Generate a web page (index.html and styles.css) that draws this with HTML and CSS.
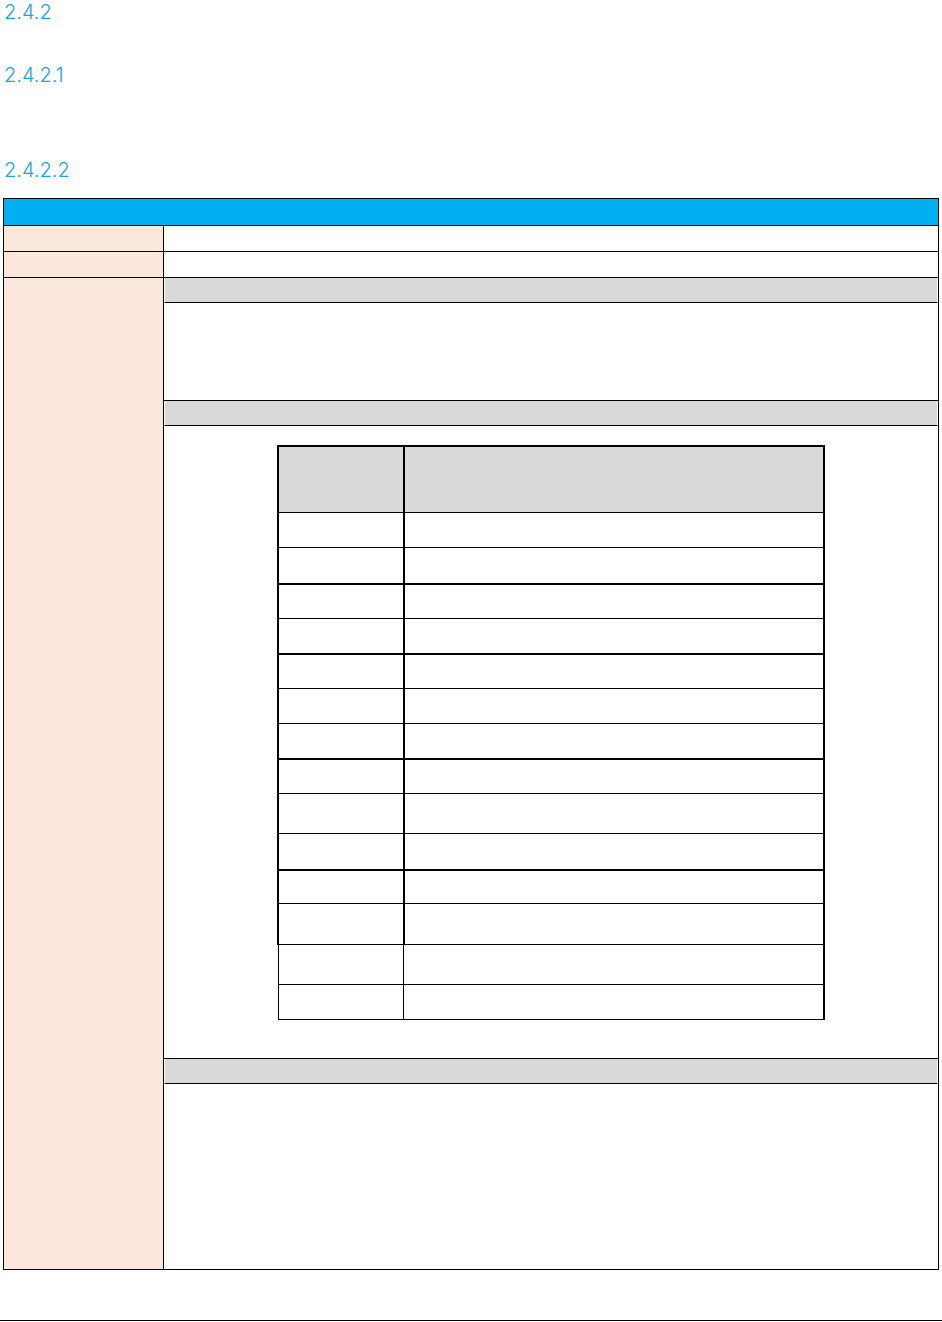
FILE: index.html
```html
<!DOCTYPE html>
<html lang="es">
<head>
    <meta charset="UTF-8">
    <meta name="viewport" content="width=device-width, initial-scale=1.0">
    <title>2.4.2</title>
    <link rel="stylesheet" href="styles.css">
</head>
<body>
    <div class="heading">2.4.2</div>
    <div class="heading sub">2.4.2.1</div>
    <div class="heading subsub">2.4.2.2</div>

    <div class="ficha">
        <div class="ficha-head"></div>
        <div class="ficha-row">
            <div class="label"></div>
            <div class="value"></div>
        </div>
        <div class="ficha-row">
            <div class="label"></div>
            <div class="value"></div>
        </div>
        <div class="ficha-row last">
            <div class="label"></div>
            <div class="value">
                <div class="band"></div>
                <div class="block intro"></div>
                <div class="band"></div>
                <div class="block">
                    <div class="inner">
                        <div class="irow head"><div class="c1"></div><div class="c2"></div></div>
                        <div class="irow h35"><div class="c1"></div><div class="c2"></div></div>
                        <div class="irow h37 thick"><div class="c1"></div><div class="c2"></div></div>
                        <div class="irow h34"><div class="c1"></div><div class="c2"></div></div>
                        <div class="irow h36 thick"><div class="c1"></div><div class="c2"></div></div>
                        <div class="irow h34"><div class="c1"></div><div class="c2"></div></div>
                        <div class="irow h35"><div class="c1"></div><div class="c2"></div></div>
                        <div class="irow h36 thick"><div class="c1"></div><div class="c2"></div></div>
                        <div class="irow h34"><div class="c1"></div><div class="c2"></div></div>
                        <div class="irow h40"><div class="c1"></div><div class="c2"></div></div>
                        <div class="irow h37 thick"><div class="c1"></div><div class="c2"></div></div>
                        <div class="irow h33"><div class="c1"></div><div class="c2"></div></div>
                        <div class="irow h41"><div class="c1"></div><div class="c2"></div></div>
                        <div class="irow h40 loose"><div class="c1"></div><div class="c2"></div></div>
                        <div class="irow h35 loose"><div class="c1"></div><div class="c2"></div></div>
                    </div>
                </div>
                <div class="band"></div>
                <div class="block outro"></div>
            </div>
        </div>
    </div>

    <div class="page-rule"></div>
</body>
</html>
```

FILE: styles.css
```css
body {
    margin: 0;
    font-family: Inter, "Open Sans", "Liberation Sans", sans-serif;
    color: #000;
    background-color: white;
}

.heading {
    height: 25px;
    line-height: 25px;
    padding-left: 4px;
    font-size: 20px;
    font-weight: 300;
    color: #1ba3dd;
}

.heading.sub {
    margin-top: 38px;
}

.heading.subsub {
    margin-top: 70px;
}

/* tabla principal */
.ficha {
    width: 936px;
    margin: 15px 0 0 3px;
    border: 1px solid #000;
    box-sizing: border-box;
}

.ficha-head {
    height: 26px;
    background-color: #00b0f0;
    border-bottom: 1px solid #000;
}

.ficha-row {
    display: grid;
    grid-template-columns: 160px 1fr;
    height: 26px;
    border-bottom: 1px solid #000;
    box-sizing: border-box;
}

.ficha-row.last {
    height: auto;
    border-bottom: none;
}

.label {
    background-color: #fbe8da;
    border-right: 1px solid #000;
}

.band {
    height: 24px;
    background-color: #d9d9d9;
    border-left: 1px solid #fff;
    border-right: 1px solid #fff;
    border-bottom: 1px solid #000;
}

.block {
    border-bottom: 1px solid #000;
    overflow: hidden;
}

.block.intro {
    height: 97px;
}

.block.outro {
    height: 185px;
    border-bottom: none;
}

/* tabla interior */
.inner {
    width: 548px;
    margin: 19px auto 38px;
    border-top: 2px solid #000;
    border-right: 2px solid #000;
    box-sizing: border-box;
}

.irow {
    display: grid;
    grid-template-columns: 126px 1fr;
    box-sizing: border-box;
    border-left: 2px solid #000;
    border-bottom: 1px solid #000;
}

.irow .c1 {
    border-right: 2px solid #000;
}

.irow.head {
    height: 66px;
    background-color: #d9d9d9;
}

.irow.thick {
    border-bottom-width: 2px;
}

.irow.loose {
    grid-template-columns: 125px 1fr;
    border-left: 1px solid #000;
    margin-left: 1px;
}

.irow.loose .c1 {
    border-right-width: 1px;
}

.h33 { height: 33px; }
.h34 { height: 34px; }
.h35 { height: 35px; }
.h36 { height: 36px; }
.h37 { height: 37px; }
.h40 { height: 40px; }
.h41 { height: 41px; }

.page-rule {
    margin-top: 50px;
    height: 1px;
    background-color: #000;
}
```
